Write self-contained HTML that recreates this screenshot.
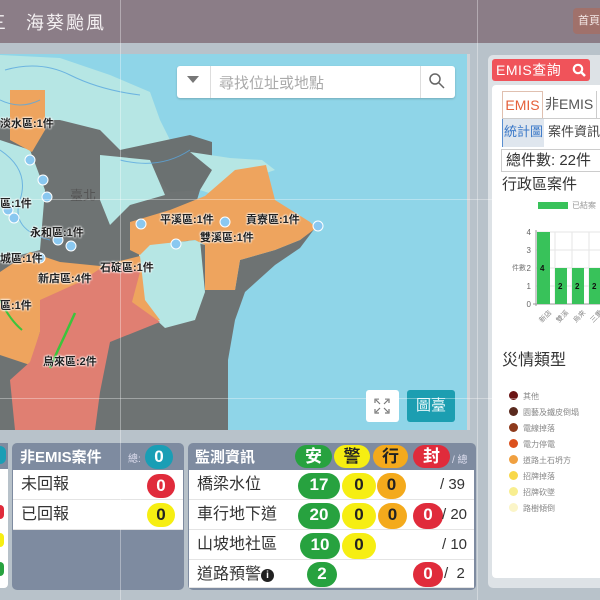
<!DOCTYPE html><html><head><meta charset="utf-8"><style>
*{margin:0;padding:0;box-sizing:border-box}
body{width:600px;height:600px;overflow:hidden;background:#b8c2ca;font-family:"Liberation Sans","Noto Sans CJK TC",sans-serif;position:relative}
.a{position:absolute}
.pill{position:absolute;border-radius:14px;text-align:center;font-weight:bold;font-size:17px;line-height:24px;color:#222}
.g{background:#27a23f;color:#fff}.y{background:#f6ee12}.o{background:#f4aa1c}.r{background:#e02b3b;color:#fff}
.row{position:absolute;background:#fff;border-bottom:1px solid #e4e4e4;font-size:16px;color:#333;line-height:29px;padding-left:8px}
.lbl{position:absolute;font-size:11px;font-weight:bold;color:#222;text-shadow:0 0 2px #fff,0 0 2px #fff,0 0 2px #fff;white-space:nowrap}
.leg{position:absolute;left:509px;font-size:8px;color:#888;line-height:10px}
.leg i{display:inline-block;width:9px;height:9px;border-radius:50%;margin-right:5px;vertical-align:-1px}
</style></head><body>
<div class="a" style="left:0;top:0;width:600px;height:43px;background:#8b7d87"></div>
<div class="a" style="left:-12px;top:9px;color:#f4f0f2;font-size:18px">三</div>
<div class="a" style="left:26px;top:9px;color:#f4f0f2;font-size:18px;letter-spacing:2px">海葵颱風</div>
<div class="a" style="left:573px;top:8px;width:40px;height:26px;background:#a0716b;border-radius:4px;color:#f3e6e4;font-size:11px;line-height:26px;padding-left:5px">首頁</div>

<svg class="a" style="left:0;top:54px" width="467" height="376" viewBox="0 54 467 376">
<rect x="0" y="54" width="467" height="376" fill="#8fd5e8"/>
<path d="M0,120 L60,120 L120,130 L160,140 L190,140 L215,175 L200,190 L185,240 L205,245 L205,290 L235,290 L240,260 L275,250 L300,240 L315,228 L300,248 L275,265 L245,292 L235,320 L228,360 L228,430 L0,430Z" fill="#6e7373"/>
<path d="M0,55 L60,58 L110,75 L150,92 L160,120 L175,150 L120,150 L100,130 L60,120 L0,120Z" fill="#b6e6e4"/>
<path d="M120,150 L190,135 L212,142 L212,170 L200,190 L170,192 L155,175Z" fill="#6b7171"/>
<path d="M190,152 L230,158 L262,160 L275,170 L240,182 L215,195 L200,190 L212,170Z" fill="#b6e6e4"/>
<path d="M100,155 L150,160 L165,195 L130,205 L110,225 L100,200Z" fill="#b6e6e4"/>
<path d="M140,245 L200,240 L205,292 L195,320 L165,328 L135,300Z" fill="#b6e6e4"/>
<path d="M0,140 L30,150 L45,190 L40,250 L0,260Z" fill="#b6e6e4"/>
<path d="M130,222 L170,210 L205,196 L235,170 L266,165 L275,200 L310,222 L316,228 L300,240 L275,250 L240,260 L235,290 L205,290 L205,245 L195,240 L150,245 L140,255 L130,250Z" fill="#eea45e"/>
<path d="M0,272 L30,252 L60,262 L100,266 L140,256 L145,300 L160,320 L110,332 L60,335 L40,332 L30,365 L0,355Z" fill="#eea45e"/>
<path d="M10,90 L45,90 L45,130 L32,152 L10,140Z" fill="#eea45e"/>
<path d="M40,300 L80,282 L110,262 L140,272 L132,302 L160,322 L110,342 L100,392 L95,430 L15,430 L10,380 L30,362 L40,332Z" fill="#e07f72"/>
<g stroke="#5aa8e0" stroke-width="1" fill="none" opacity=".8"><path d="M5,70 Q40,60 70,75 T140,95"/><path d="M0,150 Q30,170 20,200 T50,240"/><path d="M120,160 Q160,170 190,150"/><path d="M0,100 Q20,110 40,100"/></g>
<path d="M0,300 Q10,320 22,330" stroke="#3cc43c" stroke-width="2" fill="none"/>
<path d="M75,313 L65,335 L58,350 L50,368" stroke="#3cc43c" stroke-width="2.5" fill="none"/>
<g fill="#8ac8f0" stroke="#fff" stroke-width="1">
<circle cx="30" cy="160" r="5"/><circle cx="43" cy="180" r="5"/><circle cx="47" cy="197" r="5"/><circle cx="8" cy="210" r="5"/><circle cx="14" cy="218" r="5"/><circle cx="71" cy="246" r="5"/><circle cx="141" cy="224" r="5"/><circle cx="176" cy="244" r="5"/><circle cx="225" cy="222" r="5"/><circle cx="318" cy="226" r="5"/><circle cx="40" cy="258" r="5"/><circle cx="58" cy="240" r="5"/></g>
<text x="70" y="200" font-size="13" fill="#555">臺北</text>
</svg>
<div class="lbl" style="left:0;top:115px">淡水區:1件</div>
<div class="lbl" style="left:0;top:195px">區:1件</div>
<div class="lbl" style="left:30px;top:224px">永和區:1件</div>
<div class="lbl" style="left:0;top:250px">城區:1件</div>
<div class="lbl" style="left:38px;top:270px">新店區:4件</div>
<div class="lbl" style="left:0;top:297px">區:1件</div>
<div class="lbl" style="left:100px;top:259px">石碇區:1件</div>
<div class="lbl" style="left:160px;top:211px">平溪區:1件</div>
<div class="lbl" style="left:246px;top:211px">貢寮區:1件</div>
<div class="lbl" style="left:200px;top:229px">雙溪區:1件</div>
<div class="lbl" style="left:43px;top:353px">烏來區:2件</div>

<div class="a" style="left:177px;top:66px;width:278px;height:32px;background:#fff;border-radius:3px;box-shadow:0 1px 2px rgba(0,0,0,.2)"></div>
<div class="a" style="left:187px;top:76px;width:0;height:0;border-left:6px solid transparent;border-right:6px solid transparent;border-top:7px solid #777"></div>
<div class="a" style="left:210px;top:66px;width:1px;height:32px;background:#ddd"></div>
<div class="a" style="left:219px;top:72px;font-size:15px;color:#aaa">尋找位址或地點</div>
<div class="a" style="left:420px;top:66px;width:1px;height:32px;background:#ddd"></div>
<svg class="a" style="left:428px;top:72px" width="18" height="18"><circle cx="7" cy="7" r="5" stroke="#666" stroke-width="1.5" fill="none"/><line x1="11" y1="11" x2="16" y2="16" stroke="#666" stroke-width="1.5"/></svg>
<div class="a" style="left:366px;top:390px;width:33px;height:32px;background:#fff;border-radius:3px"></div>
<svg class="a" style="left:374px;top:398px" width="16" height="16" stroke="#777" fill="none" stroke-width="1.2"><path d="M1,5V1H5M11,1H15V5M15,11V15H11M5,15H1V11M2,2L6,6M14,2L10,6M14,14L10,10M2,14L6,10"/></svg>
<div class="a" style="left:407px;top:390px;width:48px;height:32px;background:#1c9eb1;border-radius:3px;color:#e8f8fa;font-size:15px;line-height:32px;text-align:center">圖臺</div>
<div class="a" style="left:467px;top:54px;width:3px;height:376px;background:#cfd3d7"></div>

<div class="a" style="left:488px;top:55px;width:120px;height:533px;background:#dde2e6;border-radius:5px"></div>
<div class="a" style="left:492px;top:59px;width:98px;height:22px;background:#f0535a;border-radius:3px;color:#fff;font-size:14px;line-height:22px;padding-left:4px;letter-spacing:.5px">EMIS查詢</div>
<svg class="a" style="left:572px;top:63px" width="14" height="14"><circle cx="6" cy="6" r="4.2" stroke="#fff" stroke-width="2.2" fill="none"/><line x1="9" y1="9" x2="13" y2="13" stroke="#fff" stroke-width="2.5"/></svg>
<div class="a" style="left:492px;top:85px;width:120px;height:493px;background:#fff;border-radius:4px"></div>
<div class="a" style="left:502px;top:91px;width:41px;height:27px;border:1px solid #e0c0b0;border-bottom:none;color:#e5603a;font-size:14px;line-height:27px;text-align:center">EMIS</div>
<div class="a" style="left:545px;top:91px;font-size:14px;color:#555;line-height:27px">非EMIS</div>
<div class="a" style="left:596px;top:91px;width:1px;height:27px;background:#ccc"></div>
<div class="a" style="left:502px;top:118px;width:98px;height:1px;background:#ccc"></div>
<div class="a" style="left:502px;top:119px;width:42px;height:28px;background:#dfe6ee;border-left:1px solid #5a8fd0;color:#3a78c8;font-size:13px;line-height:26px;text-align:center">統計圖</div>
<div class="a" style="left:548px;top:119px;font-size:13px;color:#444;line-height:26px">案件資訊</div>
<div class="a" style="left:501px;top:149px;width:110px;height:23px;border:1px solid #ccc;font-size:15px;color:#333;line-height:21px;padding-left:4px">總件數: 22件</div>
<div class="a" style="left:502px;top:173px;font-size:15px;color:#333">行政區案件</div>
<div class="a" style="left:538px;top:202px;width:30px;height:7px;background:#38c25a"></div>
<div class="a" style="left:572px;top:200px;font-size:8px;color:#999">已結案</div>
<svg class="a" style="left:500px;top:225px" width="100" height="110">
<g stroke="#e6e6e6"><line x1="36" y1="7" x2="100" y2="7"/><line x1="36" y1="25" x2="100" y2="25"/><line x1="36" y1="43" x2="100" y2="43"/><line x1="36" y1="61" x2="100" y2="61"/><line x1="55" y1="7" x2="55" y2="79"/><line x1="72" y1="7" x2="72" y2="79"/><line x1="89" y1="7" x2="89" y2="79"/></g>
<line x1="36" y1="5" x2="36" y2="81" stroke="#999"/><line x1="33" y1="79" x2="100" y2="79" stroke="#999"/>
<g font-size="8" fill="#666" text-anchor="end"><text x="31" y="10">4</text><text x="31" y="28">3</text><text x="31" y="46">2</text><text x="31" y="64">1</text><text x="31" y="82">0</text></g>
<text x="12" y="45" font-size="7" fill="#777">件數</text>
<g fill="#38c25a"><rect x="37" y="7" width="13" height="72"/><rect x="55" y="43" width="12" height="36"/><rect x="72" y="43" width="12" height="36"/><rect x="89" y="43" width="12" height="36"/></g>
<g font-size="8" font-weight="bold" fill="#111"><text x="40" y="46">4</text><text x="58" y="64">2</text><text x="75" y="64">2</text><text x="92" y="64">2</text></g>
<g font-size="7" fill="#888"><text transform="translate(42,98) rotate(-45)">新店</text><text transform="translate(59,98) rotate(-45)">雙溪</text><text transform="translate(76,98) rotate(-45)">烏來</text><text transform="translate(93,98) rotate(-45)">三重</text></g>
</svg>
<div class="a" style="left:502px;top:346px;font-size:16px;color:#333">災情類型</div>
<div class="leg" style="top:391px"><i style="background:#6b1515"></i>其他</div>
<div class="leg" style="top:407px"><i style="background:#5a2a1e"></i>園藝及鐵皮倒塌</div>
<div class="leg" style="top:423px"><i style="background:#8e3a1c"></i>電線掉落</div>
<div class="leg" style="top:439px"><i style="background:#dc511e"></i>電力停電</div>
<div class="leg" style="top:455px"><i style="background:#f0a040"></i>道路土石坍方</div>
<div class="leg" style="top:471px"><i style="background:#f8d84a"></i>招牌掉落</div>
<div class="leg" style="top:487px"><i style="background:#f8ee90"></i>招牌砍墜</div>
<div class="leg" style="top:503px"><i style="background:#fbf5c8"></i>路樹傾倒</div>

<div class="a" style="left:0;top:443px;width:8px;height:145px;background:#fff;border-radius:0 0 4px 0"></div>
<div class="a" style="left:0;top:443px;width:8px;height:26px;background:#7e8ba0"></div>
<div class="a" style="left:0;top:446px;width:6px;height:18px;border-radius:0 9px 9px 0;background:#1a9eb5"></div>
<div class="a" style="left:0;top:505px;width:4px;height:14px;border-radius:0 7px 7px 0;background:#e02b3b"></div>
<div class="a" style="left:0;top:533px;width:4px;height:14px;border-radius:0 7px 7px 0;background:#f6ee12"></div>
<div class="a" style="left:0;top:562px;width:4px;height:14px;border-radius:0 7px 7px 0;background:#27a23f"></div>

<div class="a" style="left:12px;top:443px;width:172px;height:147px;background:#7e8ba0;border-radius:5px"></div>
<div class="a" style="left:20px;top:446px;color:#fff;font-size:15px;font-weight:bold">非EMIS案件</div>
<div class="a" style="left:128px;top:450px;color:#dde;font-size:10px">總:</div>
<div class="pill" style="left:145px;top:445px;width:28px;height:24px;background:#1a9eb5;color:#fff">0</div>
<div class="row" style="left:13px;top:470px;width:170px;height:30px">未回報</div>
<div class="row" style="left:13px;top:500px;width:170px;height:30px">已回報</div>
<div class="pill r" style="left:147px;top:474px;width:28px;height:24px">0</div>
<div class="pill y" style="left:147px;top:503px;width:28px;height:24px">0</div>

<div class="a" style="left:188px;top:443px;width:288px;height:147px;background:#7e8ba0;border-radius:5px"></div>
<div class="a" style="left:195px;top:446px;color:#fff;font-size:15px;font-weight:bold">監測資訊</div>
<div class="pill g" style="left:295px;top:445px;width:37px;height:23px">安</div>
<div class="pill y" style="left:334px;top:445px;width:36px;height:23px">警</div>
<div class="pill o" style="left:373px;top:445px;width:35px;height:23px">行</div>
<div class="pill r" style="left:413px;top:445px;width:37px;height:23px">封</div>
<div class="a" style="left:452px;top:451px;color:#dde;font-size:10px">/ 總</div>
<div class="row" style="left:189px;top:470px;width:285px;height:30px">橋梁水位</div>
<div class="row" style="left:189px;top:500px;width:285px;height:30px">車行地下道</div>
<div class="row" style="left:189px;top:530px;width:285px;height:30px">山坡地社區</div>
<div class="row" style="left:189px;top:560px;width:285px;height:28px">道路預警<span style="display:inline-block;width:13px;height:13px;border-radius:50%;background:#222;color:#fff;font-size:10px;line-height:13px;text-align:center;font-weight:bold;vertical-align:1px">i</span></div>
<div class="pill g" style="left:298px;top:473px;width:42px;height:26px">17</div>
<div class="pill y" style="left:342px;top:473px;width:34px;height:26px">0</div>
<div class="pill o" style="left:377px;top:473px;width:29px;height:26px">0</div>
<div class="a" style="left:440px;top:476px;font-size:15px;color:#333">/ 39</div>
<div class="pill g" style="left:298px;top:503px;width:42px;height:26px">20</div>
<div class="pill y" style="left:342px;top:503px;width:34px;height:26px">0</div>
<div class="pill o" style="left:378px;top:503px;width:29px;height:26px">0</div>
<div class="pill r" style="left:413px;top:503px;width:30px;height:26px">0</div>
<div class="a" style="left:442px;top:506px;font-size:15px;color:#333">/ 20</div>
<div class="pill g" style="left:300px;top:533px;width:40px;height:26px">10</div>
<div class="pill y" style="left:342px;top:533px;width:34px;height:26px">0</div>
<div class="a" style="left:442px;top:536px;font-size:15px;color:#333">/ 10</div>
<div class="pill g" style="left:307px;top:562px;width:30px;height:25px">2</div>
<div class="pill r" style="left:413px;top:562px;width:30px;height:25px">0</div>
<div class="a" style="left:444px;top:565px;font-size:15px;color:#333">/&nbsp; 2</div>

<div class="a" style="left:120px;top:0;width:1px;height:600px;background:rgba(255,255,255,.35)"></div>
<div class="a" style="left:477px;top:0;width:1px;height:600px;background:rgba(255,255,255,.35)"></div>
<div class="a" style="left:0;top:199px;width:600px;height:1px;background:rgba(255,255,255,.35)"></div>
<div class="a" style="left:0;top:398px;width:600px;height:1px;background:rgba(255,255,255,.35)"></div>
</body></html>
